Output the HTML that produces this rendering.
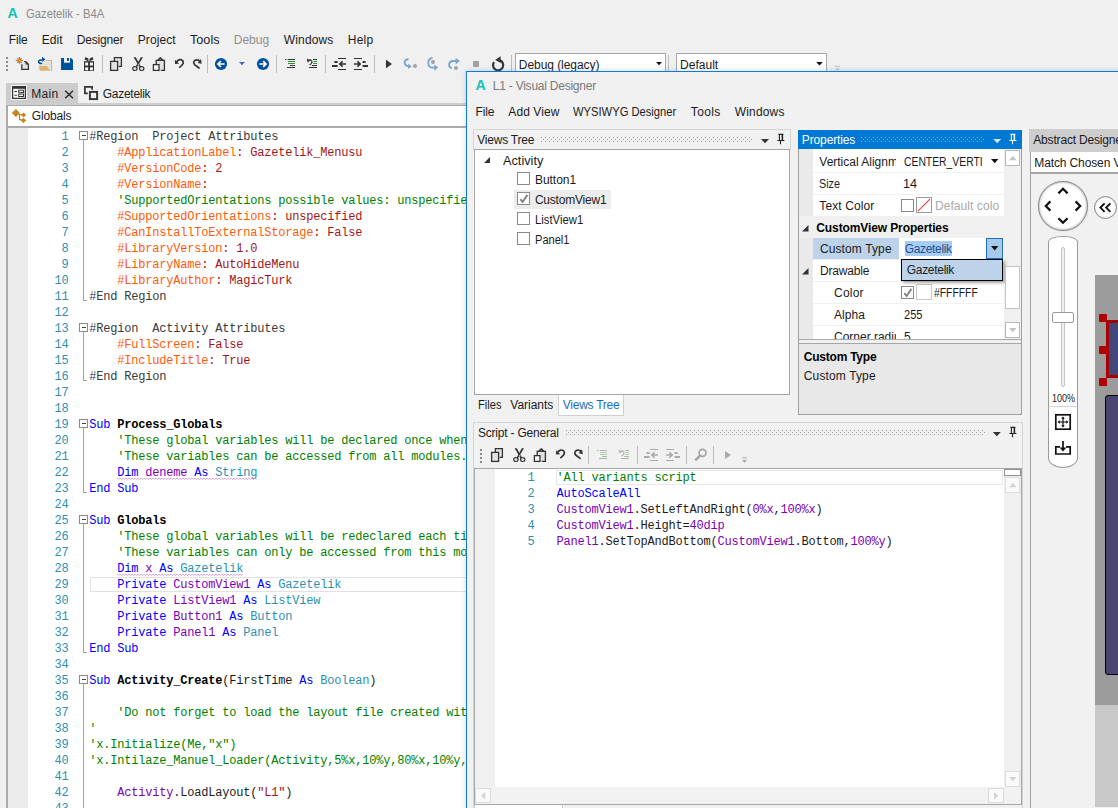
<!DOCTYPE html><html><head><meta charset="utf-8"><title>Gazetelik - B4A</title><style>
*{box-sizing:border-box;margin:0;padding:0}
html,body{width:1118px;height:808px;overflow:hidden;background:#f0f0f0}
body{position:relative;font-family:"Liberation Sans",sans-serif;font-size:12px;color:#1b1b1b}
.a{position:absolute}
.t{position:absolute;white-space:pre;line-height:16px;height:16px;letter-spacing:-0.3px}
.m{position:absolute;white-space:pre;font-family:"Liberation Mono",monospace;font-size:12px;line-height:16px;height:16px;letter-spacing:-0.2012px;color:#1b1b1b}
.ln{color:#2b91af;text-align:right}
.kw{color:#0000ff}.ty{color:#2b91af}.va{color:#7a00b4}.cm{color:#008000}.at{color:#ff5a0a}.av{color:#a31515}.st{color:#a31515}.rg{color:#3a3a3a}.nm{color:#7a00b4}
b{font-weight:bold;color:#000}
svg{position:absolute;overflow:visible}
.sq{text-decoration:underline wavy #c06fc0 1px;text-underline-offset:2px}
</style></head><body>
<svg style="left:8px;top:8px" width="11" height="11" viewBox="0 0 11 11"><text x="-0.4" y="10.2" font-family="Liberation Sans, sans-serif" font-weight="bold" font-size="14.2" fill="#12c3b7">A</text></svg>
<div class="t" style="left:26.34px;top:6px;letter-spacing:0;transform:scaleX(0.9391);transform-origin:0 0;color:#8a8a8a">Gazetelik - B4A</div>
<div class="t" style="left:8.8px;top:32px;letter-spacing:-0.181px;">File</div>
<div class="t" style="left:41.8px;top:32px;letter-spacing:0.038px;">Edit</div>
<div class="t" style="left:76.8px;top:32px;letter-spacing:-0.176px;">Designer</div>
<div class="t" style="left:137.8px;top:32px;letter-spacing:0.073px;">Project</div>
<div class="t" style="left:189.76px;top:32px;letter-spacing:0;transform:scaleX(1.0548);transform-origin:0 0;">Tools</div>
<div class="t" style="left:233.8px;top:32px;letter-spacing:-0.019px;color:#8e8e8e">Debug</div>
<div class="t" style="left:283.8px;top:32px;letter-spacing:0.144px;">Windows</div>
<div class="t" style="left:347.8px;top:32px;letter-spacing:0.204px;">Help</div>
<div class="a" style="left:515px;top:53px;width:151px;height:20px;background:#fff;border:1px solid #a8a8a8"></div>
<div class="t" style="left:518.8px;top:57px;letter-spacing:-0.060px;">Debug (legacy)</div>
<div class="a" style="left:676px;top:53px;width:151px;height:20px;background:#fff;border:1px solid #a8a8a8"></div>
<div class="t" style="left:680.1px;top:57px;letter-spacing:0.011px;">Default</div>
<svg style="left:0;top:50px" width="900" height="30" viewBox="0 50 900 30"><rect x="6" y="57" width="2" height="2" fill="#8c8c8c"/><rect x="6" y="61" width="2" height="2" fill="#8c8c8c"/><rect x="6" y="65" width="2" height="2" fill="#8c8c8c"/><rect x="6" y="69" width="2" height="2" fill="#8c8c8c"/><g stroke="#c8761a" stroke-width="1.1" stroke-linecap="round"><path d="M16.2 60.5h2M20.8 60.5h2M19.5 57.2v2M19.5 61.8v2M17.4 58.4l.9.9M20.7 61.7l.9.9M21.6 58.4l-.9.9M18.3 61.7l-.9.9"/></g><circle cx="19.5" cy="60.5" r="1.4" fill="none" stroke="#c8761a" stroke-width="1.1"/><path d="M21.8 64.2V69.4H28.4V64.2L25.8 61.6H24.2" fill="#e2e2e2" stroke="#333333" stroke-width="1.3" stroke-linejoin="round"/><path d="M25.6 61.4V64.4H28.6Z" fill="#333333"/><rect x="38.6" y="61.5" width="12.6" height="9.5" fill="#e2e2e2"/><path d="M46 60.5H51.5V71" fill="none" stroke="#deb36c" stroke-width="1.1"/><path d="M39 66H47L50.2 70.8H40.2Z" fill="#deb36c"/><path d="M41.5 63.6C38.5 63.6 37.6 60.8 39.8 60.2C41.2 59.8 42.6 60.2 43.4 59.6" fill="none" stroke="#00519c" stroke-width="1.5" stroke-linecap="round"/><path d="M42 56.8L45.4 59.3L42.4 62Z" fill="#00519c"/><path d="M61 58H71L73 60V70H61Z" fill="#00519c"/><rect x="64" y="58" width="6" height="4.7" fill="#eeeeee"/><rect x="67" y="58" width="2" height="2.8" fill="#00519c"/><rect x="84" y="61.2" width="10" height="9.8" fill="#333333"/><rect x="85.2" y="62.6" width="2.9" height="2.9" fill="#fff"/><rect x="90" y="62.6" width="2.9" height="2.9" fill="#fff"/><rect x="85.2" y="67.4" width="2.9" height="2.9" fill="#fff"/><rect x="90" y="67.4" width="2.9" height="2.9" fill="#fff"/><path d="M88.7 61.4L84.6 59.6L85.4 57.1L88.3 58.5Z" fill="#333333"/><path d="M89.3 61.4L93.4 59.6L92.6 57.1L89.7 58.5Z" fill="#333333"/><rect x="102.0" y="55" width="1" height="18" fill="#bdbdbd"/><rect x="207.0" y="55" width="1" height="18" fill="#bdbdbd"/><rect x="276.0" y="55" width="1" height="18" fill="#bdbdbd"/><rect x="325.0" y="55" width="1" height="18" fill="#bdbdbd"/><rect x="374.0" y="55" width="1" height="18" fill="#bdbdbd"/><rect x="511" y="55" width="1" height="16" fill="#bdbdbd"/><rect x="668" y="55" width="1" height="16" fill="#bdbdbd"/><g transform="translate(110 57)" fill="#e2e2e2" stroke="#333333" stroke-width="1.3"><path d="M4.4 4.2V0.6H11.4V9.4H8.6" /><rect x="0.6" y="4.4" width="7" height="9"/></g><g transform="translate(132.3 57)"><path d="M1.3 0.2L3.5 0.2L8.8 9.9L7.5 10.5Z" fill="#333333"/><path d="M10.7 0.2L8.5 0.2L3.2 9.9L4.5 10.5Z" fill="#333333"/><ellipse cx="2.6" cy="11.6" rx="2.2" ry="1.9" fill="none" stroke="#333333" stroke-width="1.2"/><ellipse cx="9.4" cy="11.6" rx="2.2" ry="1.9" fill="none" stroke="#333333" stroke-width="1.2"/><circle cx="6" cy="7.6" r="0.5" fill="#f0f0f0"/></g><g transform="translate(152.8 57)" stroke="#333333" stroke-width="1.3"><path d="M3.4 7V3.4H11.6V13.4H8" fill="#e2e2e2"/><path d="M4.9 3.2L7.5 0.8L10.1 3.2Z" fill="#f4f4f4" stroke-linejoin="round"/><rect x="0.6" y="7.6" width="5.6" height="5.8" fill="#fafafa"/></g><g transform="translate(174.7 59.2)"><path d="M1.9 3C2.9 0 6.7 -0.4 8.2 1.8C9.6 4 7.9 5.8 5.1 8" stroke="#333333" fill="none" stroke-width="1.7" stroke-linecap="round"/><path d="M0.2 0.6L0.3 4.8L4.4 4.6Z" fill="#333333"/></g><g transform="translate(193.2 59.2)"><path d="M5.8 8.8L1.4 5.4C-0.6 3.4 1 0.6 3.8 0.6C5.2 0.6 6.2 1.2 6.8 2.2" stroke="#333333" fill="none" stroke-width="1.7" stroke-linecap="round"/><path d="M7.8 -0.2L8.5 4.6L4.4 3.7Z" fill="#333333"/></g><circle cx="221" cy="64" r="6.1" fill="#00519c"/><path d="M224.6 64H218.2M220.8 61.2L218 64L220.8 66.8" fill="none" stroke="#fff" stroke-width="1.7"/><path d="M239 62H245L242 65.2Z" fill="#4668b4"/><circle cx="263" cy="64" r="6.1" fill="#00519c"/><path d="M259.4 64H265.8M263.2 61.2L266 64L263.2 66.8" fill="none" stroke="#fff" stroke-width="1.7"/><g stroke-width="1"><path d="M285 59.5h1.4M287.6 59.5H295" stroke="#333333"/><path d="M288 61.5H295M288 63.5H295" stroke="#2f8f2f"/><path d="M290 65.5H295M287 67.5H295" stroke="#333333"/><path d="M313 59.5H317" stroke="#333333"/><path d="M313.4 61.5H317M313.4 63.5H317" stroke="#2f8f2f"/><path d="M312 65.5H317M309 67.5H317" stroke="#333333"/><path d="M308.2 60.4C311.4 58.6 313 62 311.2 63.6L309.6 65.2" fill="none" stroke="#333333" stroke-width="1.2"/><path d="M306.8 58.6L307.4 62.4L310.4 60.4Z" fill="#333333" stroke="none"/></g><g stroke="#333333" fill="none"><path d="M338 58.5H346M338 69.5H346" stroke-width="1"/><path d="M334.4 62H337.6M332 66H337.6" stroke-width="1.8"/><path d="M346 64H340M342.6 61.4L339.8 64L342.6 66.6" stroke-width="1.6"/><path d="M354 58.5H362M354 69.5H362" stroke-width="1"/><path d="M362.6 62H365.6M362.6 66H368" stroke-width="1.8"/><path d="M354 64H360M357.4 61.4L360.2 64L357.4 66.6" stroke-width="1.6"/></g><path d="M386 59.8L392 64L386 68.2Z" fill="#333333"/><path d="M408.5 59C404 59.5 403.2 64.5 407.5 66.2L410 66.6" fill="none" stroke="#7ba7cf" stroke-width="1.8"/><path d="M408.4 63.6L411.8 66.6L408 69Z" fill="#7ba7cf"/><circle cx="415" cy="66" r="2" fill="#a2a2a2"/><path d="M432.5 58C427.5 58.5 426.6 66 431.5 67.6L436 67.6" fill="none" stroke="#7ba7cf" stroke-width="1.8"/><path d="M434.4 64.4L438.2 67.6L434.4 70.8Z" fill="#7ba7cf"/><circle cx="433" cy="62" r="2" fill="#a2a2a2"/><path d="M451.8 68.4C447.5 66.5 448.5 61.2 453 61L457 61" fill="none" stroke="#7ba7cf" stroke-width="1.8"/><path d="M455.6 57.8L459.8 61L455.6 64.4Z" fill="#7ba7cf"/><circle cx="456" cy="68" r="2" fill="#a2a2a2"/><rect x="473" y="61" width="6" height="6" fill="#a2a2a2"/><path d="M499.9 60.4A5.1 5.1 0 1 1 494 62.2" fill="none" stroke="#333333" stroke-width="2.2"/><path d="M500.6 56.2L495.2 59.9L500.8 63Z" fill="#333333"/><path d="M656 62H662L659 65.2Z" fill="#111"/><path d="M816.2 62H822.8L819.5 65.4Z" fill="#111"/><rect x="835" y="65.8" width="5" height="1" fill="#c4c4c4"/><path d="M835 68.4H840L837.5 71Z" fill="#c4c4c4"/></svg>
<div class="a" style="left:6px;top:83px;width:72px;height:20px;background:#cccccc"></div>
<div class="a" style="left:6px;top:103px;width:1112px;height:2px;background:#cecece"></div>
<div class="a" style="left:6px;top:105px;width:1112px;height:1px;background:#ababab"></div>
<div class="a" style="left:6px;top:105px;width:2px;height:703px;background:#ababab"></div>
<div class="t" style="left:31.3px;top:86px;letter-spacing:0.261px;">Main</div>
<div class="t" style="left:102.8px;top:86px;letter-spacing:-0.279px;">Gazetelik</div>
<div class="a" style="left:8px;top:106px;width:1110px;height:20px;background:#fff"></div>
<div class="a" style="left:8px;top:126px;width:1110px;height:2px;background:#ababab"></div>
<div class="t" style="left:31.8px;top:108px;letter-spacing:-0.148px;">Globals</div>
<svg style="left:0;top:80px" width="120" height="50" viewBox="0 80 120 50"><rect x="11" y="85" width="16" height="15" fill="#fff"/><rect x="12.6" y="86.6" width="12.8" height="11.8" fill="#fff" stroke="#333" stroke-width="1.3"/><rect x="12" y="86" width="14" height="2.8" fill="#333"/><path d="M14.4 91.5h2.6M14.4 95.3h2.6" stroke="#333" stroke-width="1.1"/><rect x="18.7" y="90.2" width="4.8" height="2.4" fill="none" stroke="#333" stroke-width="1"/><rect x="18.7" y="94.1" width="4.8" height="2.4" fill="none" stroke="#333" stroke-width="1"/><path d="M65.2 90.7L73 98.3M73 90.7L65.2 98.3" stroke="#2a2a2a" stroke-width="1.45"/><path d="M87.8 93.4H84.9V86.9H92.1V89.8" fill="none" stroke="#333" stroke-width="1.7"/><rect x="89.9" y="91.9" width="7.2" height="7.2" fill="none" stroke="#333" stroke-width="1.9"/><path d="M11.8 112.9L15.9 108.9L20 112.9L15.9 116.9Z" fill="#c6841c"/><path d="M18.6 114.6H22M19.5 114.6V119.7H21.6" fill="none" stroke="#c6841c" stroke-width="1.3"/><path d="M23.6 112.6L26.1 115L23.6 117.4L21.1 115Z" fill="#c6841c"/><path d="M23.4 117.7L26.2 120.4L23.4 123.1L20.6 120.4Z" fill="#c6841c"/></svg>
<div class="a" style="left:8px;top:128px;width:1110px;height:680px;background:#fff"></div>
<div class="a" style="left:8px;top:128px;width:20px;height:680px;background:#ebebeb"></div>
<div class="a" style="left:90px;top:577px;width:400px;height:15px;border:1px solid #e2e2e2;background:#fff"></div>
<div class="m ln" style="left:28.5px;top:129px;width:40px">1</div>
<div class="m" style="left:89.3px;top:129px;width:380px;overflow:hidden"><span class="rg">#Region  Project Attributes</span></div>
<div class="m ln" style="left:28.5px;top:145px;width:40px">2</div>
<div class="m" style="left:89.3px;top:145px;width:380px;overflow:hidden">    <span class="at">#ApplicationLabel</span><span class="av">: Gazetelik_Menusu</span></div>
<div class="m ln" style="left:28.5px;top:161px;width:40px">3</div>
<div class="m" style="left:89.3px;top:161px;width:380px;overflow:hidden">    <span class="at">#VersionCode</span><span class="av">: 2</span></div>
<div class="m ln" style="left:28.5px;top:177px;width:40px">4</div>
<div class="m" style="left:89.3px;top:177px;width:380px;overflow:hidden">    <span class="at">#VersionName</span><span class="av">:</span></div>
<div class="m ln" style="left:28.5px;top:193px;width:40px">5</div>
<div class="m" style="left:89.3px;top:193px;width:380px;overflow:hidden">    <span class="cm">&#x27;SupportedOrientations possible values: unspecified, landscape or portrait.</span></div>
<div class="m ln" style="left:28.5px;top:209px;width:40px">6</div>
<div class="m" style="left:89.3px;top:209px;width:380px;overflow:hidden">    <span class="at">#SupportedOrientations</span><span class="av">: unspecified</span></div>
<div class="m ln" style="left:28.5px;top:225px;width:40px">7</div>
<div class="m" style="left:89.3px;top:225px;width:380px;overflow:hidden">    <span class="at">#CanInstallToExternalStorage</span><span class="av">: False</span></div>
<div class="m ln" style="left:28.5px;top:241px;width:40px">8</div>
<div class="m" style="left:89.3px;top:241px;width:380px;overflow:hidden">    <span class="at">#LibraryVersion</span><span class="av">: 1.0</span></div>
<div class="m ln" style="left:28.5px;top:257px;width:40px">9</div>
<div class="m" style="left:89.3px;top:257px;width:380px;overflow:hidden">    <span class="at">#LibraryName</span><span class="av">: AutoHideMenu</span></div>
<div class="m ln" style="left:28.5px;top:273px;width:40px">10</div>
<div class="m" style="left:89.3px;top:273px;width:380px;overflow:hidden">    <span class="at">#LibraryAuthor</span><span class="av">: MagicTurk</span></div>
<div class="m ln" style="left:28.5px;top:289px;width:40px">11</div>
<div class="m" style="left:89.3px;top:289px;width:380px;overflow:hidden"><span class="rg">#End Region</span></div>
<div class="m ln" style="left:28.5px;top:305px;width:40px">12</div>
<div class="m ln" style="left:28.5px;top:321px;width:40px">13</div>
<div class="m" style="left:89.3px;top:321px;width:380px;overflow:hidden"><span class="rg">#Region  Activity Attributes</span></div>
<div class="m ln" style="left:28.5px;top:337px;width:40px">14</div>
<div class="m" style="left:89.3px;top:337px;width:380px;overflow:hidden">    <span class="at">#FullScreen</span><span class="av">: False</span></div>
<div class="m ln" style="left:28.5px;top:353px;width:40px">15</div>
<div class="m" style="left:89.3px;top:353px;width:380px;overflow:hidden">    <span class="at">#IncludeTitle</span><span class="av">: True</span></div>
<div class="m ln" style="left:28.5px;top:369px;width:40px">16</div>
<div class="m" style="left:89.3px;top:369px;width:380px;overflow:hidden"><span class="rg">#End Region</span></div>
<div class="m ln" style="left:28.5px;top:385px;width:40px">17</div>
<div class="m ln" style="left:28.5px;top:401px;width:40px">18</div>
<div class="m ln" style="left:28.5px;top:417px;width:40px">19</div>
<div class="m" style="left:89.3px;top:417px;width:380px;overflow:hidden"><span class="kw">Sub </span><b>Process_Globals</b></div>
<div class="m ln" style="left:28.5px;top:433px;width:40px">20</div>
<div class="m" style="left:89.3px;top:433px;width:380px;overflow:hidden">    <span class="cm">&#x27;These global variables will be declared once when the application starts.</span></div>
<div class="m ln" style="left:28.5px;top:449px;width:40px">21</div>
<div class="m" style="left:89.3px;top:449px;width:380px;overflow:hidden">    <span class="cm">&#x27;These variables can be accessed from all modules.</span></div>
<div class="m ln" style="left:28.5px;top:465px;width:40px">22</div>
<div class="m" style="left:89.3px;top:465px;width:380px;overflow:hidden">    <span class="kw">Dim </span><span class="va">deneme</span><span class="kw"> As </span><span class="ty">String</span></div>
<div class="m ln" style="left:28.5px;top:481px;width:40px">23</div>
<div class="m" style="left:89.3px;top:481px;width:380px;overflow:hidden"><span class="kw">End Sub</span></div>
<div class="m ln" style="left:28.5px;top:497px;width:40px">24</div>
<div class="m ln" style="left:28.5px;top:513px;width:40px">25</div>
<div class="m" style="left:89.3px;top:513px;width:380px;overflow:hidden"><span class="kw">Sub </span><b>Globals</b></div>
<div class="m ln" style="left:28.5px;top:529px;width:40px">26</div>
<div class="m" style="left:89.3px;top:529px;width:380px;overflow:hidden">    <span class="cm">&#x27;These global variables will be redeclared each time the activity is created.</span></div>
<div class="m ln" style="left:28.5px;top:545px;width:40px">27</div>
<div class="m" style="left:89.3px;top:545px;width:380px;overflow:hidden">    <span class="cm">&#x27;These variables can only be accessed from this module.</span></div>
<div class="m ln" style="left:28.5px;top:561px;width:40px">28</div>
<div class="m" style="left:89.3px;top:561px;width:380px;overflow:hidden">    <span class="kw">Dim </span><span class="va">x</span><span class="kw"> As </span><span class="ty">Gazetelik</span></div>
<div class="m ln" style="left:28.5px;top:577px;width:40px">29</div>
<div class="m" style="left:89.3px;top:577px;width:380px;overflow:hidden">    <span class="kw">Private </span><span class="va">CustomView1</span><span class="kw"> As </span><span class="ty">Gazetelik</span></div>
<div class="m ln" style="left:28.5px;top:593px;width:40px">30</div>
<div class="m" style="left:89.3px;top:593px;width:380px;overflow:hidden">    <span class="kw">Private </span><span class="va">ListView1</span><span class="kw"> As </span><span class="ty">ListView</span></div>
<div class="m ln" style="left:28.5px;top:609px;width:40px">31</div>
<div class="m" style="left:89.3px;top:609px;width:380px;overflow:hidden">    <span class="kw">Private </span><span class="va">Button1</span><span class="kw"> As </span><span class="ty">Button</span></div>
<div class="m ln" style="left:28.5px;top:625px;width:40px">32</div>
<div class="m" style="left:89.3px;top:625px;width:380px;overflow:hidden">    <span class="kw">Private </span><span class="va">Panel1</span><span class="kw"> As </span><span class="ty">Panel</span></div>
<div class="m ln" style="left:28.5px;top:641px;width:40px">33</div>
<div class="m" style="left:89.3px;top:641px;width:380px;overflow:hidden"><span class="kw">End Sub</span></div>
<div class="m ln" style="left:28.5px;top:657px;width:40px">34</div>
<div class="m ln" style="left:28.5px;top:673px;width:40px">35</div>
<div class="m" style="left:89.3px;top:673px;width:380px;overflow:hidden"><span class="kw">Sub </span><b>Activity_Create</b>(FirstTime <span class="kw">As </span><span class="ty">Boolean</span>)</div>
<div class="m ln" style="left:28.5px;top:689px;width:40px">36</div>
<div class="m ln" style="left:28.5px;top:705px;width:40px">37</div>
<div class="m" style="left:89.3px;top:705px;width:380px;overflow:hidden">    <span class="cm">&#x27;Do not forget to load the layout file created with the visual designer. For example:</span></div>
<div class="m ln" style="left:28.5px;top:721px;width:40px">38</div>
<div class="m" style="left:89.3px;top:721px;width:380px;overflow:hidden"><span class="cm">&#x27;</span></div>
<div class="m ln" style="left:28.5px;top:737px;width:40px">39</div>
<div class="m" style="left:89.3px;top:737px;width:380px;overflow:hidden"><span class="cm">&#x27;x.Initialize(Me,&quot;x&quot;)</span></div>
<div class="m ln" style="left:28.5px;top:753px;width:40px">40</div>
<div class="m" style="left:89.3px;top:753px;width:380px;overflow:hidden"><span class="cm">&#x27;x.Intilaze_Manuel_Loader(Activity,5%x,10%y,80%x,10%y,Colors.White)</span></div>
<div class="m ln" style="left:28.5px;top:769px;width:40px">41</div>
<div class="m ln" style="left:28.5px;top:785px;width:40px">42</div>
<div class="m" style="left:89.3px;top:785px;width:380px;overflow:hidden">    <span class="va">Activity</span>.LoadLayout(<span class="st">&quot;L1&quot;</span>)</div>
<div class="m ln" style="left:28.5px;top:801px;width:40px">43</div>
<svg style="left:0;top:128px" width="100" height="680" viewBox="0 128 100 680" shape-rendering="crispEdges"><rect x="79.5" y="131.5" width="8" height="8" fill="#fff" stroke="#8a8a8a"/><path d="M81.5 135.5h4.2" stroke="#444" stroke-width="1"/><path d="M83.5 140V300.5H87" fill="none" stroke="#a2a2a2" stroke-width="1"/><rect x="79.5" y="323.5" width="8" height="8" fill="#fff" stroke="#8a8a8a"/><path d="M81.5 327.5h4.2" stroke="#444" stroke-width="1"/><path d="M83.5 332V380.5H87" fill="none" stroke="#a2a2a2" stroke-width="1"/><rect x="79.5" y="419.5" width="8" height="8" fill="#fff" stroke="#8a8a8a"/><path d="M81.5 423.5h4.2" stroke="#444" stroke-width="1"/><path d="M83.5 428V492.5H87" fill="none" stroke="#a2a2a2" stroke-width="1"/><rect x="79.5" y="515.5" width="8" height="8" fill="#fff" stroke="#8a8a8a"/><path d="M81.5 519.5h4.2" stroke="#444" stroke-width="1"/><path d="M83.5 524V652.5H87" fill="none" stroke="#a2a2a2" stroke-width="1"/><rect x="79.5" y="675.5" width="8" height="8" fill="#fff" stroke="#8a8a8a"/><path d="M81.5 679.5h4.2" stroke="#444" stroke-width="1"/><path d="M83.5 684V828.5H87" fill="none" stroke="#a2a2a2" stroke-width="1"/></svg>
<svg style="left:0;top:475.6px" width="470" height="6" viewBox="0 475.6 470 6"><path d="M117.0 477.6L118.5 479.2L120.0 477.6L121.5 479.2L123.0 477.6L124.5 479.2L126.0 477.6L127.5 479.2L129.0 477.6L130.5 479.2L132.0 477.6L133.5 479.2L135.0 477.6L136.5 479.2L138.0 477.6L139.5 479.2L141.0 477.6L142.5 479.2L144.0 477.6L145.5 479.2L147.0 477.6L148.5 479.2L150.0 477.6L151.5 479.2L153.0 477.6L154.5 479.2L156.0 477.6L157.5 479.2L159.0 477.6L160.5 479.2L162.0 477.6L163.5 479.2L165.0 477.6L166.5 479.2L168.0 477.6L169.5 479.2L171.0 477.6L172.5 479.2L174.0 477.6L175.5 479.2L177.0 477.6L178.5 479.2L180.0 477.6L181.5 479.2L183.0 477.6L184.5 479.2L186.0 477.6L187.5 479.2L189.0 477.6L190.5 479.2L192.0 477.6L193.5 479.2L195.0 477.6L196.5 479.2L198.0 477.6L199.5 479.2L201.0 477.6L202.5 479.2L204.0 477.6L205.5 479.2L207.0 477.6L208.5 479.2L210.0 477.6L211.5 479.2L213.0 477.6L214.5 479.2L216.0 477.6L217.5 479.2L219.0 477.6L220.5 479.2L222.0 477.6L223.5 479.2L225.0 477.6L226.5 479.2L228.0 477.6L229.5 479.2L231.0 477.6L232.5 479.2L234.0 477.6L235.5 479.2L237.0 477.6L238.5 479.2L240.0 477.6L241.5 479.2L243.0 477.6L244.5 479.2L246.0 477.6L247.5 479.2L249.0 477.6L250.5 479.2L252.0 477.6L253.5 479.2L255.0 477.6L256.5 479.2" fill="none" stroke="#cf8fd0" stroke-width="0.8"/></svg>
<svg style="left:0;top:571.6px" width="470" height="6" viewBox="0 571.6 470 6"><path d="M117.0 573.6L118.5 575.2L120.0 573.6L121.5 575.2L123.0 573.6L124.5 575.2L126.0 573.6L127.5 575.2L129.0 573.6L130.5 575.2L132.0 573.6L133.5 575.2L135.0 573.6L136.5 575.2L138.0 573.6L139.5 575.2L141.0 573.6L142.5 575.2L144.0 573.6L145.5 575.2L147.0 573.6L148.5 575.2L150.0 573.6L151.5 575.2L153.0 573.6L154.5 575.2L156.0 573.6L157.5 575.2L159.0 573.6L160.5 575.2L162.0 573.6L163.5 575.2L165.0 573.6L166.5 575.2L168.0 573.6L169.5 575.2L171.0 573.6L172.5 575.2L174.0 573.6L175.5 575.2L177.0 573.6L178.5 575.2L180.0 573.6L181.5 575.2L183.0 573.6L184.5 575.2L186.0 573.6L187.5 575.2L189.0 573.6L190.5 575.2L192.0 573.6L193.5 575.2L195.0 573.6L196.5 575.2L198.0 573.6L199.5 575.2L201.0 573.6L202.5 575.2L204.0 573.6L205.5 575.2L207.0 573.6L208.5 575.2L210.0 573.6L211.5 575.2L213.0 573.6L214.5 575.2L216.0 573.6L217.5 575.2L219.0 573.6L220.5 575.2L222.0 573.6L223.5 575.2L225.0 573.6L226.5 575.2L228.0 573.6L229.5 575.2L231.0 573.6L232.5 575.2L234.0 573.6L235.5 575.2L237.0 573.6L238.5 575.2L240.0 573.6L241.5 575.2L243.0 573.6" fill="none" stroke="#cf8fd0" stroke-width="0.8"/></svg>
<div class="a" style="left:466px;top:71px;width:660px;height:745px;background:#f1f1f1;border:1px solid #1577d6;box-shadow:0 0 5px rgba(40,110,200,0.28)"></div>
<svg style="left:475.5px;top:80px" width="11" height="11" viewBox="0 0 11 11"><text x="-0.4" y="10.2" font-family="Liberation Sans, sans-serif" font-weight="bold" font-size="14.2" fill="#12c3b7">A</text></svg>
<div class="t" style="left:492.8px;top:78px;letter-spacing:-0.234px;color:#7a7a7a">L1 - Visual Designer</div>
<div class="t" style="left:475.6px;top:104px;letter-spacing:-0.181px;">File</div>
<div class="t" style="left:508.3px;top:104px;letter-spacing:0.081px;">Add View</div>
<div class="t" style="left:573.1px;top:104px;letter-spacing:0;transform:scaleX(0.9327);transform-origin:0 0;">WYSIWYG Designer</div>
<div class="t" style="left:690.8px;top:104px;letter-spacing:0.346px;">Tools</div>
<div class="t" style="left:734.8px;top:104px;letter-spacing:0.152px;">Windows</div>
<div class="a" style="left:473px;top:129px;width:318px;height:21px;border:1px solid #d4d4d4"></div>
<div class="t" style="left:477.3px;top:132px;letter-spacing:-0.232px;">Views Tree</div>
<svg style="left:541px;top:137px" width="212" height="5"><defs><pattern id="g541" width="4" height="4" patternUnits="userSpaceOnUse"><rect x="0" y="0" width="1" height="1" fill="#9a9a9a"/><rect x="2" y="2" width="1" height="1" fill="#9a9a9a"/></pattern></defs><rect width="212" height="5" fill="url(#g541)"/></svg>
<div class="a" style="left:474px;top:149px;width:316px;height:246px;background:#fff;border:1px solid #a6a6a6"></div>
<svg style="left:484px;top:157px" width="7" height="7"><path d="M6 0V6H0Z" fill="#333"/></svg>
<div class="t" style="left:502.76px;top:153px;letter-spacing:0;transform:scaleX(1.0601);transform-origin:0 0;">Activity</div>
<div class="a" style="left:514px;top:190px;width:97px;height:19px;background:#ececec"></div>
<div class="a" style="left:517px;top:172px;width:13px;height:13px;background:#fff;border:1px solid #8a8a8a"></div>
<div class="t" style="left:534.9px;top:172px;letter-spacing:-0.013px;">Button1</div>
<div class="a" style="left:517px;top:192px;width:13px;height:13px;background:#fff;border:1px solid #8a8a8a"></div>
<div class="t" style="left:534.9px;top:192px;letter-spacing:-0.211px;">CustomView1</div>
<div class="a" style="left:517px;top:212px;width:13px;height:13px;background:#fff;border:1px solid #8a8a8a"></div>
<div class="t" style="left:534.94px;top:212px;letter-spacing:0;transform:scaleX(0.9425);transform-origin:0 0;">ListView1</div>
<div class="a" style="left:517px;top:232px;width:13px;height:13px;background:#fff;border:1px solid #8a8a8a"></div>
<div class="t" style="left:534.95px;top:232px;letter-spacing:0;transform:scaleX(0.9217);transform-origin:0 0;">Panel1</div>
<svg style="left:517px;top:192px" width="13" height="13"><path d="M3.3 7.2L5.6 10L10.4 2.9" fill="none" stroke="#808080" stroke-width="1.9"/></svg>
<div class="t" style="left:477.95px;top:397px;letter-spacing:0;transform:scaleX(0.9253);transform-origin:0 0;">Files</div>
<div class="t" style="left:510.3px;top:397px;letter-spacing:-0.013px;">Variants</div>
<div class="a" style="left:558px;top:395px;width:66px;height:21px;background:#fff;border:1px solid #d0d0d0;border-top:none"></div>
<div class="t" style="left:562.8px;top:397px;letter-spacing:-0.260px;color:#1a6fc4">Views Tree</div>
<div class="a" style="left:798px;top:130px;width:224px;height:285px;background:#e8e8e8;border:1px solid #a0a0a0"></div>
<div class="a" style="left:798px;top:130px;width:224px;height:19px;background:#0078d4"></div>
<div class="t" style="left:801.8px;top:132px;letter-spacing:-0.128px;color:#fff">Properties</div>
<svg style="left:861px;top:137px" width="124" height="5"><defs><pattern id="g861" width="4" height="4" patternUnits="userSpaceOnUse"><rect x="0" y="0" width="1" height="1" fill="#7fbdf0"/><rect x="2" y="2" width="1" height="1" fill="#7fbdf0"/></pattern></defs><rect width="124" height="5" fill="url(#g861)"/></svg>
<svg style="left:470px;top:125px" width="660" height="30" viewBox="470 125 660 30"><path d="M761 139H769L765 143.2Z" fill="#333"/><path d="M778.4 134.4H783.4M779.4 134.4V140.4M782.6 134.4V140.4M777.4 140.5H784.4M780.5 140.5V144.2" fill="none" stroke="#222" stroke-width="1.1"/><rect x="781.6" y="134.4" width="1" height="6" fill="#222"/><path d="M993.2 139H1001.2L997.2 143.2Z" fill="#cfe4f7"/><path d="M1010.4 134.4H1015.4M1011.4 134.4V140.4M1014.6 134.4V140.4M1009.4 140.5H1016.4M1012.5 140.5V144.2" fill="none" stroke="#fff" stroke-width="1.1"/><rect x="1013.6" y="134.4" width="1" height="6" fill="#fff"/></svg>
<div class="a" style="left:799px;top:149px;width:205px;height:190px;background:#fff"></div>
<div class="a" style="left:799px;top:149px;width:14px;height:190px;background:#eaeaea"></div>
<div class="a" style="left:1004px;top:149px;width:17px;height:190px;background:#f0f0f0"></div>
<div class="a" style="left:813px;top:172px;width:191px;height:1px;background:#f0f0f0"></div>
<div class="a" style="left:813px;top:194px;width:191px;height:1px;background:#f0f0f0"></div>
<div class="a" style="left:813px;top:259px;width:191px;height:1px;background:#f0f0f0"></div>
<div class="a" style="left:813px;top:281px;width:191px;height:1px;background:#f0f0f0"></div>
<div class="a" style="left:813px;top:303px;width:191px;height:1px;background:#f0f0f0"></div>
<div class="a" style="left:813px;top:325px;width:191px;height:1px;background:#f0f0f0"></div>
<div class="a" style="left:799px;top:216px;width:205px;height:22px;background:#f0f0f0"></div>
<div class="t" style="left:816.3px;top:220px;letter-spacing:-0.109px;"><b>CustomView Properties</b></div>
<div class="a" style="left:813px;top:238px;width:86px;height:21px;background:#bcd3ea"></div>
<div class="a" style="left:799px;top:149px;width:205px;height:190px;overflow:hidden">
<div class="a" style="left:20.3px;top:5px;width:76.39999999999998px;height:16px;overflow:hidden"><div class="t" style="left:0;top:0;letter-spacing:-0.005px;">Vertical Alignment</div></div>
<div class="a" style="left:20.37px;top:27px;width:77px;height:16px;overflow:hidden"><div class="t" style="left:0;top:0;letter-spacing:0;transform:scaleX(0.9017);transform-origin:0 0;">Size</div></div>
<div class="a" style="left:20.3px;top:49px;width:77px;height:16px;overflow:hidden"><div class="t" style="left:0;top:0;letter-spacing:0.113px;">Text Color</div></div>
<div class="a" style="left:20.9px;top:92px;width:76.39999999999998px;height:16px;overflow:hidden"><div class="t" style="left:0;top:0;letter-spacing:0.122px;">Custom Type</div></div>
<div class="a" style="left:20.9px;top:114px;width:76.39999999999998px;height:16px;overflow:hidden"><div class="t" style="left:0;top:0;letter-spacing:-0.179px;">Drawable</div></div>
<div class="a" style="left:35.05px;top:136px;width:62.25px;height:16px;overflow:hidden"><div class="t" style="left:0;top:0;letter-spacing:0.216px;">Color</div></div>
<div class="a" style="left:35.05px;top:158px;width:62.25px;height:16px;overflow:hidden"><div class="t" style="left:0;top:0;letter-spacing:0.062px;">Alpha</div></div>
<div class="a" style="left:35.05px;top:180px;width:62.25px;height:16px;overflow:hidden"><div class="t" style="left:0;top:0;letter-spacing:-0.013px;">Corner radius</div></div>
<div class="a" style="left:105.4px;top:5px;width:79px;height:16px;overflow:hidden"><div class="t" style="left:0;top:0;letter-spacing:0;transform:scaleX(0.8630);transform-origin:0 0;">CENTER_VERTICAL</div></div>
<div class="t" style="left:104.01px;top:27px;letter-spacing:0;transform:scaleX(1.0592);transform-origin:0 0;">14</div>
<div class="t" style="left:135.9px;top:49px;letter-spacing:0.075px;color:#a8a8a8">Default colo</div>
<div class="t" style="left:135.39px;top:136px;letter-spacing:0;transform:scaleX(0.8647);transform-origin:0 0;">#FFFFFF</div>
<div class="t" style="left:104.76px;top:158px;letter-spacing:0;transform:scaleX(0.9186);transform-origin:0 0;">255</div>
<div class="t" style="left:105px;top:180px;">5</div>
</div>
<div class="a" style="left:905px;top:241px;width:47px;height:15px;background:#a8cdf2"></div>
<div class="t" style="left:904.8px;top:241px;letter-spacing:-0.341px;color:#1f4f8f">Gazetelik</div>
<div class="a" style="left:901px;top:199px;width:13px;height:13px;background:#fff;border:1px solid #8a8a8a"></div>
<div class="a" style="left:916px;top:197px;width:16px;height:16px;background:#fff;border:1px solid #9a9a9a"></div>
<svg style="left:916px;top:197px" width="16" height="16"><path d="M2 14L14 2" stroke="#f01818" stroke-width="1.05"/></svg>
<div class="a" style="left:901px;top:286px;width:13px;height:13px;background:#fff;border:1px solid #8a8a8a"></div>
<svg style="left:901px;top:286px" width="13" height="13"><path d="M3.3 7.2L5.6 10L10.4 2.9" fill="none" stroke="#808080" stroke-width="1.9"/></svg>
<div class="a" style="left:916px;top:284px;width:16px;height:16px;background:#fff;border:1px solid #c8c8c8"></div>
<svg style="left:801.5px;top:224.5px" width="7" height="7"><path d="M6.5 0V6.5H0Z" fill="#333"/></svg>
<svg style="left:801.5px;top:267.5px" width="7" height="7"><path d="M6.5 0V6.5H0Z" fill="#333"/></svg>
<svg style="left:991px;top:159px" width="8" height="5"><path d="M0 0H7.4L3.7 4.2Z" fill="#111"/></svg>
<div class="a" style="left:986px;top:238px;width:17px;height:21px;background:#a9c9e8;border:1px solid #1a6fc4"></div>
<svg style="left:990.5px;top:246px" width="8" height="5"><path d="M0 0H7.4L3.7 4.4Z" fill="#111"/></svg>
<div class="a" style="left:901px;top:259px;width:102px;height:22px;background:#bcd3ea;border:1px solid #000;box-shadow:2px 2px 3px rgba(0,0,0,0.35)"></div>
<div class="t" style="left:906.8px;top:262px;letter-spacing:-0.310px;">Gazetelik</div>
<div class="a" style="left:1005px;top:150px;width:15px;height:16px;background:#fff;border:1px solid #b8b8b8"></div>
<svg style="left:1008.5px;top:155.5px" width="8" height="5"><path d="M0 4.2H7.6L3.8 0Z" fill="#c4c4c4"/></svg>
<div class="a" style="left:1005px;top:266px;width:15px;height:43px;background:#fff;border:1px solid #c4c4c4"></div>
<div class="a" style="left:1005px;top:322px;width:15px;height:16px;background:#fff;border:1px solid #b8b8b8"></div>
<svg style="left:1008.5px;top:328px" width="8" height="5"><path d="M0 0H7.6L3.8 4.2Z" fill="#c4c4c4"/></svg>
<div class="a" style="left:799px;top:339px;width:222px;height:1px;background:#a8a8a8"></div>
<div class="a" style="left:799px;top:340px;width:222px;height:3px;background:#f0f0f0"></div>
<div class="a" style="left:799px;top:343px;width:222px;height:1px;background:#a8a8a8"></div>
<div class="t" style="left:803.8px;top:349px;letter-spacing:-0.233px;"><b>Custom Type</b></div>
<div class="t" style="left:803.8px;top:368px;letter-spacing:0.132px;">Custom Type</div>
<div class="a" style="left:473px;top:422px;width:550px;height:386px;border:1px solid #d4d4d4;border-bottom:none"></div>
<div class="t" style="left:477.9px;top:425px;letter-spacing:-0.205px;">Script - General</div>
<svg style="left:566px;top:430px" width="419" height="5"><defs><pattern id="g566" width="4" height="4" patternUnits="userSpaceOnUse"><rect x="0" y="0" width="1" height="1" fill="#9a9a9a"/><rect x="2" y="2" width="1" height="1" fill="#9a9a9a"/></pattern></defs><rect width="419" height="5" fill="url(#g566)"/></svg>
<svg style="left:470px;top:420px" width="660" height="50" viewBox="470 420 660 50"><path d="M992.8 432H1000.8L996.8 436.2Z" fill="#333"/><path d="M1010.4 427.4H1015.4M1011.4 427.4V433.4M1014.6 427.4V433.4M1009.4 433.5H1016.4M1012.5 433.5V437.2" fill="none" stroke="#222" stroke-width="1.1"/><rect x="1013.6" y="427.4" width="1" height="6" fill="#222"/><rect x="480" y="449" width="2" height="2" fill="#8c8c8c"/><rect x="480" y="453" width="2" height="2" fill="#8c8c8c"/><rect x="480" y="457" width="2" height="2" fill="#8c8c8c"/><rect x="480" y="461" width="2" height="2" fill="#8c8c8c"/><g transform="translate(491 448)" fill="#e2e2e2" stroke="#333333" stroke-width="1.3"><path d="M4.4 4.2V0.6H11.4V9.4H8.6" /><rect x="0.6" y="4.4" width="7" height="9"/></g><g transform="translate(513.3 448)"><path d="M1.3 0.2L3.5 0.2L8.8 9.9L7.5 10.5Z" fill="#333333"/><path d="M10.7 0.2L8.5 0.2L3.2 9.9L4.5 10.5Z" fill="#333333"/><ellipse cx="2.6" cy="11.6" rx="2.2" ry="1.9" fill="none" stroke="#333333" stroke-width="1.2"/><ellipse cx="9.4" cy="11.6" rx="2.2" ry="1.9" fill="none" stroke="#333333" stroke-width="1.2"/><circle cx="6" cy="7.6" r="0.5" fill="#f0f0f0"/></g><g transform="translate(533.8 448)" stroke="#333333" stroke-width="1.3"><path d="M3.4 7V3.4H11.6V13.4H8" fill="#e2e2e2"/><path d="M4.9 3.2L7.5 0.8L10.1 3.2Z" fill="#f4f4f4" stroke-linejoin="round"/><rect x="0.6" y="7.6" width="5.6" height="5.8" fill="#fafafa"/></g><g transform="translate(555.8 449.6)"><path d="M1.9 3C2.9 0 6.7 -0.4 8.2 1.8C9.6 4 7.9 5.8 5.1 8" stroke="#333333" fill="none" stroke-width="1.7" stroke-linecap="round"/><path d="M0.2 0.6L0.3 4.8L4.4 4.6Z" fill="#333333"/></g><g transform="translate(574.3 449.6)"><path d="M5.8 8.8L1.4 5.4C-0.6 3.4 1 0.6 3.8 0.6C5.2 0.6 6.2 1.2 6.8 2.2" stroke="#333333" fill="none" stroke-width="1.7" stroke-linecap="round"/><path d="M7.8 -0.2L8.5 4.6L4.4 3.7Z" fill="#333333"/></g><rect x="588" y="446" width="1" height="18" fill="#bdbdbd"/><rect x="637" y="446" width="1" height="18" fill="#bdbdbd"/><rect x="686" y="446" width="1" height="18" fill="#bdbdbd"/><rect x="713" y="446" width="1" height="18" fill="#bdbdbd"/><g stroke-width="1"><path d="M597 450.5h1.4M599.6 450.5H607" stroke="#b4b4b4"/><path d="M600 452.5H607M600 454.5H607" stroke="#a6d2a6"/><path d="M602 456.5H607M599 458.5H607" stroke="#b4b4b4"/><path d="M625 450.5H629" stroke="#b4b4b4"/><path d="M625.4 452.5H629M625.4 454.5H629" stroke="#a6d2a6"/><path d="M624 456.5H629M621 458.5H629" stroke="#b4b4b4"/><path d="M620.2 451.4C623.4 449.6 625 453 623.2 454.6L621.6 456.2" fill="none" stroke="#b4b4b4" stroke-width="1.2"/><path d="M618.8 449.6L619.4 453.4L622.4 451.4Z" fill="#b4b4b4" stroke="none"/></g><g stroke="#ababab" fill="none"><path d="M650 449.5H658M650 460.5H658" stroke-width="1"/><path d="M646.4 453H649.6M644 457H649.6" stroke-width="1.8"/><path d="M658 455H652M654.6 452.4L651.8 455L654.6 457.6" stroke-width="1.6"/><path d="M666 449.5H674M666 460.5H674" stroke-width="1"/><path d="M674.6 453H677.6M674.6 457H680" stroke-width="1.8"/><path d="M666 455H672M669.4 452.4L672.2 455L669.4 457.6" stroke-width="1.6"/></g><circle cx="702.6" cy="452.8" r="3.5" fill="none" stroke="#a4a4a4" stroke-width="1.7"/><path d="M700.2 455.4L695.2 460.4" stroke="#a4a4a4" stroke-width="2.2"/><path d="M725 451L731 455L725 459Z" fill="#a8a8a8"/><rect x="742" y="457.4" width="5" height="1" fill="#a8a8a8"/><path d="M742 460H747L744.5 462.8Z" fill="#a8a8a8"/></svg>
<div class="a" style="left:474px;top:468px;width:548px;height:337px;background:#fff;border:1px solid #a6a6a6"></div>
<div class="a" style="left:475px;top:469px;width:20px;height:318px;background:#f0f0f0"></div>
<div class="a" style="left:556px;top:470px;width:447px;height:15px;border:1px solid #e8e8e8"></div>
<div class="m ln" style="left:494.5px;top:470px;width:40px">1</div>
<div class="m" style="left:556.6px;top:470px;width:440px;overflow:hidden"><span class="cm">&#x27;All variants script</span></div>
<div class="m ln" style="left:494.5px;top:486px;width:40px">2</div>
<div class="m" style="left:556.6px;top:486px;width:440px;overflow:hidden"><span class="kw">AutoScaleAll</span></div>
<div class="m ln" style="left:494.5px;top:502px;width:40px">3</div>
<div class="m" style="left:556.6px;top:502px;width:440px;overflow:hidden"><span class="va">CustomView1</span>.SetLeftAndRight(<span class="nm">0%x</span>,<span class="nm">100%x</span>)</div>
<div class="m ln" style="left:494.5px;top:518px;width:40px">4</div>
<div class="m" style="left:556.6px;top:518px;width:440px;overflow:hidden"><span class="va">CustomView1</span>.Height=<span class="nm">40dip</span></div>
<div class="m ln" style="left:494.5px;top:534px;width:40px">5</div>
<div class="m" style="left:556.6px;top:534px;width:440px;overflow:hidden"><span class="va">Panel1</span>.SetTopAndBottom(<span class="va">CustomView1</span>.Bottom,<span class="nm">100%y</span>)</div>
<div class="a" style="left:1004px;top:469px;width:17px;height:318px;background:#f0f0f0"></div>
<div class="a" style="left:475px;top:787px;width:546px;height:17px;background:#f2f2f2"></div>
<div class="a" style="left:1004px;top:469px;width:17px;height:7px;background:#fff;border:1px solid #8e8e8e"></div>
<div class="a" style="left:1005px;top:477px;width:15px;height:16px;background:#fafafa;border:1px solid #dcdcdc"></div>
<svg style="left:1008.5px;top:483px" width="8" height="5"><path d="M0 4.2H7.6L3.8 0Z" fill="#d4d4d4"/></svg>
<div class="a" style="left:1005px;top:771px;width:15px;height:16px;background:#fafafa;border:1px solid #dcdcdc"></div>
<svg style="left:1008.5px;top:777px" width="8" height="5"><path d="M0 0H7.6L3.8 4.2Z" fill="#d4d4d4"/></svg>
<div class="a" style="left:475px;top:788px;width:16px;height:15px;background:#fafafa;border:1px solid #dcdcdc"></div>
<svg style="left:481px;top:791.5px" width="5" height="8"><path d="M4.2 0V7.6L0 3.8Z" fill="#d4d4d4"/></svg>
<div class="a" style="left:988px;top:788px;width:16px;height:15px;background:#fafafa;border:1px solid #dcdcdc"></div>
<svg style="left:994px;top:791.5px" width="5" height="8"><path d="M0 0V7.6L4.2 3.8Z" fill="#d4d4d4"/></svg>
<div class="a" style="left:474px;top:805px;width:89px;height:5px;background:#fff;border:1px solid #d0d0d0;border-top:none"></div>
<div class="a" style="left:1029px;top:129px;width:100px;height:23px;background:#cecece"></div>
<div class="t" style="left:1033.3px;top:132px;letter-spacing:-0.179px;">Abstract Designer</div>
<div class="a" style="left:1030px;top:152px;width:100px;height:20px;background:#fff"></div>
<div class="t" style="left:1034.3px;top:155px;letter-spacing:-0.122px;">Match Chosen Variant</div>
<div class="a" style="left:1030px;top:172px;width:100px;height:2px;background:#a8a8a8"></div>
<div class="a" style="left:1030px;top:152px;width:1px;height:660px;background:#a0a0a0"></div>
<div class="a" style="left:1038px;top:181px;width:50px;height:50px;border-radius:50%;background:#fff;border:1px solid #8a8a8a;box-shadow:inset 0 0 2.5px rgba(0,0,0,0.45),0 0 1px rgba(0,0,0,0.3)"></div>
<svg style="left:1038px;top:181px" width="50" height="50"><g fill="none" stroke="#111" stroke-width="2.2"><path d="M20.4 12.4L25 7.8L29.6 12.4"/><path d="M20.4 37.2L25 41.8L29.6 37.2"/><path d="M12.4 20.4L7.8 25L12.4 29.6"/><path d="M37.6 20.4L42.2 25L37.6 29.6"/></g></svg>
<div class="a" style="left:1093.5px;top:195.5px;width:23px;height:23px;border-radius:50%;background:#fff;border:1px solid #8a8a8a;box-shadow:inset 0 0 1.5px rgba(0,0,0,0.35)"></div>
<svg style="left:1093.5px;top:195.5px" width="23" height="23"><g fill="none" stroke="#111" stroke-width="1.9"><path d="M10.6 7.4L6.4 11.6L10.6 15.8"/><path d="M16.4 7.4L12.2 11.6L16.4 15.8"/></g></svg>
<div class="a" style="left:1048px;top:236px;width:30px;height:232px;background:#fff;border:1px solid #9a9a9a;border-radius:14px 14px 15px 15px / 6px 6px 10px 10px"></div>
<div class="a" style="left:1061px;top:247px;width:4px;height:140px;background:#eef0f0;border:1px solid #c2c2c2;border-radius:2px"></div>
<div class="a" style="left:1052px;top:312px;width:22px;height:11px;background:#fff;border:1px solid #9a9a9a;border-radius:2px"></div>
<div class="t" style="left:1051.88px;top:390.5px;letter-spacing:0;transform:scaleX(0.8986);transform-origin:0 0;font-size:10px">100%</div>
<div class="a" style="left:1049px;top:406px;width:28px;height:1px;background:#d4d4d4"></div>
<svg style="left:1050px;top:410px" width="26" height="50" viewBox="1050 410 26 50"><rect x="1055.8" y="414.8" width="14.4" height="14.4" fill="#fff" stroke="#111" stroke-width="1.7"/><path d="M1058.6 422H1067.4M1063 417.6V426.4" stroke="#111" stroke-width="1.2"/><path d="M1063 416.6L1061.2 418.8H1064.8ZM1063 427.4L1061.2 425.2H1064.8ZM1057.6 422L1059.8 420.2V423.8ZM1068.4 422L1066.2 420.2V423.8Z" fill="#111"/><path d="M1060 446.8H1055.8V454H1070.2V446.8H1066" fill="none" stroke="#111" stroke-width="1.7"/><path d="M1063 441V449" stroke="#111" stroke-width="1.7"/><path d="M1059.6 447.4H1066.4L1063 451.4Z" fill="#111"/></svg>
<div class="a" style="left:1095px;top:275px;width:30px;height:430px;background:#9c9c9c"></div>
<div class="a" style="left:1095px;top:705px;width:30px;height:102px;background:#c8c8c8"></div>
<div class="a" style="left:1109px;top:323px;width:20px;height:53px;background:#40477a"></div>
<div class="a" style="left:1106px;top:320px;width:20px;height:58px;border:3px solid #a80000;border-right:none"></div>
<div class="a" style="left:1099px;top:314px;width:8px;height:8px;background:#b00000;border-radius:1px"></div>
<div class="a" style="left:1099px;top:346px;width:8px;height:8px;background:#b00000;border-radius:1px"></div>
<div class="a" style="left:1099px;top:378px;width:8px;height:8px;background:#b00000;border-radius:1px"></div>
<div class="a" style="left:1105px;top:395px;width:30px;height:280px;background:#484573;border:1px solid #000;border-radius:3px"></div>
</body></html>
